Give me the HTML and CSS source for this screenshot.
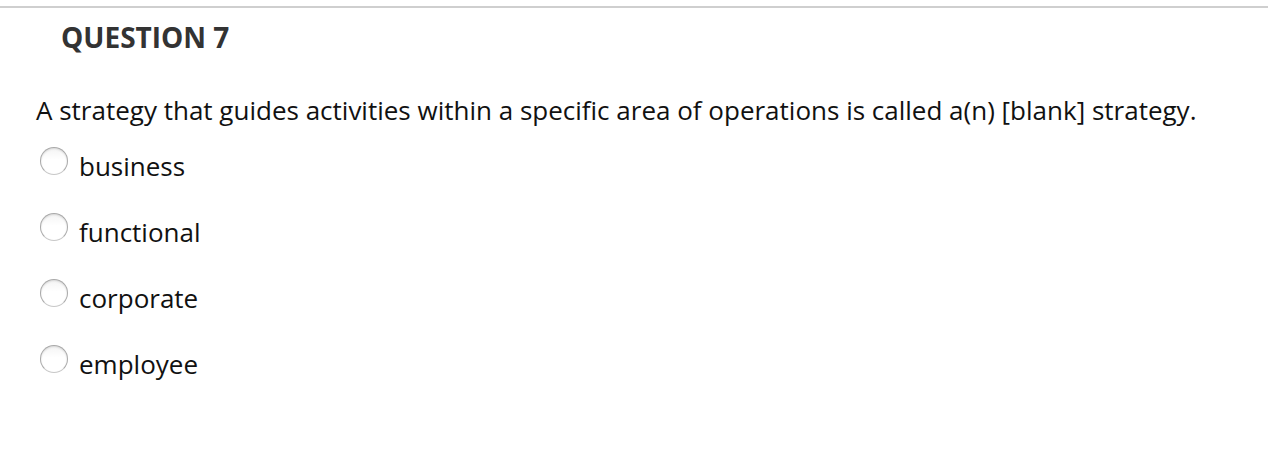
FILE: index.html
```html
<!DOCTYPE html>
<html>
<head>
<meta charset="utf-8">
<link rel="stylesheet" href="styles.css">
</head>
<body>
<div class="rule"></div>
<div class="question">
  <h2 class="q-title">QUESTION 7</h2>
  <p class="q-text">A strategy that guides activities within a specific area of operations is called a(n) [blank] strategy.</p>
  <ul class="options">
    <li class="option"><span class="radio"></span><span class="label">business</span></li>
    <li class="option"><span class="radio"></span><span class="label">functional</span></li>
    <li class="option"><span class="radio"></span><span class="label">corporate</span></li>
    <li class="option"><span class="radio"></span><span class="label">employee</span></li>
  </ul>
</div>
</body>
</html>
```
FILE: styles.css
```css
html, body {
  margin: 0;
  padding: 0;
  background: #fff;
}
body {
  font-family: "Open Sans", "Liberation Sans", sans-serif;
  color: #111;
}
.rule {
  margin-top: 6px;
  height: 2px;
  background: #cfcfcf;
}
.question {
  padding: 0 0 0 36px;
}
.q-title {
  margin: 11px 0 0 25px;
  font-size: 28px;
  font-weight: 700;
  color: #333;
  line-height: 36px;
}
.q-text {
  margin: 37px 0 0 0;
  font-size: 26px;
  line-height: 36px;
}
.options {
  list-style: none;
  margin: 18px 0 0 0;
  padding: 0 0 0 4px;
}
.option {
  display: flex;
  align-items: flex-start;
  height: 36px;
  margin-bottom: 30px;
  gap: 11px;
}
.radio {
  box-sizing: border-box;
  margin-top: 1px;
  width: 28px;
  height: 28px;
  border-radius: 50%;
  border: 1px solid #a9a9a9;
  border-bottom-color: #c8c8c8;
  background: linear-gradient(to bottom, #f4f4f4 0%, #ffffff 45%, #ffffff 100%);
  box-shadow: inset 0 1px 2px rgba(0,0,0,0.12);
}
.label {
  font-size: 26px;
  line-height: 36px;
  margin-top: 2px;
}
```
